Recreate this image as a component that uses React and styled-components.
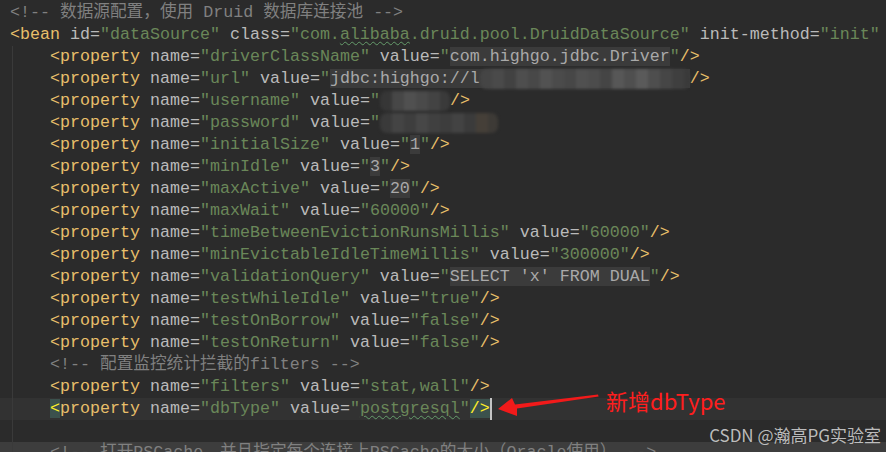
import React from "react";
import styled, { createGlobalStyle, css } from "styled-components";

const GlobalStyle = createGlobalStyle`
  html, body {
    margin: 0;
    padding: 0;
    background: #2b2b2b;
  }
  body {
    width: 886px;
    height: 452px;
    overflow: hidden;
  }
`;

const Editor = styled.div`
  position: relative;
  width: 886px;
  height: 452px;
  box-sizing: border-box;
  padding-top: 2px;
  overflow: hidden;
  background: #2b2b2b;
  font-family: "Liberation Mono", "Noto Sans CJK SC", monospace;
  font-size: 16.67px;
  color: #bababa;
`;

const Line = styled.div`
  height: 22px;
  line-height: 22px;
  white-space: pre;
  padding-left: ${(p) => (p.$indent ? 50 : 10)}px;
  background-color: ${(p) => (p.$current ? "#323232" : p.$band ? "#3d3d3d" : "transparent")};
  ${(p) =>
    p.$guide &&
    css`
      background-image: linear-gradient(
        to right,
        transparent 12px,
        #3a3a3a 12px,
        #3a3a3a 13px,
        transparent 13px
      );
    `}
`;

const Plain = styled.span`
  color: #bababa;
`;
const Tag = styled.span`
  color: #e8bf6a;
`;
const Str = styled.span`
  color: #6a8759;
`;
const Typo = styled(Str)`
  text-decoration-line: underline;
  text-decoration-style: wavy;
  text-decoration-color: #659c6b;
  text-decoration-thickness: 1px;
  text-underline-offset: 2px;
`;
const Inject = styled.span`
  color: #a9a9a9;
  background: #3b3b3b;
`;
const Comment = styled.span`
  color: #808080;
`;
const Match = styled.span`
  color: #ffef28;
  background: #3b514d;
`;
const Caret = styled.span`
  display: inline-block;
  width: 2px;
  height: 22px;
  vertical-align: top;
  background: #c4c4c4;
`;

const mosaic = (tiles) =>
  tiles.map((c, i) => `${c} ${i * 12}px, ${c} ${(i + 1) * 12}px`).join(", ");

const Blur = styled.span`
  display: inline-block;
  vertical-align: top;
  width: ${(p) => p.$w}px;
  height: 20px;
  margin-top: 1px;
  border-radius: 7px;
  filter: blur(1.4px);
  background: linear-gradient(to right, ${(p) => mosaic(p.$tiles)});
`;

const Note = styled.div`
  position: absolute;
  left: 496px;
  top: 384px;
  display: flex;
  align-items: center;
  gap: 6px;
`;

const NoteText = styled.span`
  font-family: "Noto Sans CJK SC", "Noto Sans", sans-serif;
  font-size: 22px;
  line-height: 1;
  color: #ff1e1e;
  margin-top: -2px;
`;

const Watermark = styled.div`
  position: absolute;
  right: 5px;
  top: 426px;
  font-family: "Noto Sans CJK SC", "Noto Sans", sans-serif;
  font-size: 17px;
  line-height: 17px;
  color: rgba(215, 215, 215, 0.85);
`;

const kinds = {
  plain: Plain,
  tag: Tag,
  str: Str,
  typo: Typo,
  inj: Inject,
  com: Comment,
  match: Match,
};

const urlTiles = [
  "#454545", "#4a4a4a", "#424242", "#4e4e4e", "#484848", "#525252",
  "#4b4b4b", "#474747", "#505050", "#4c4c4c", "#454545", "#575757",
  "#4f4f4f", "#5a5a5a", "#4e4e4e", "#464646", "#3f3f3f", "#3a3a3a",
];
const userTiles = ["#363636", "#474747", "#505050", "#4a4a4a", "#434343", "#3a3a3a"];
const passTiles = [
  "#3a3a3a", "#444444", "#3e3e3e", "#474747", "#404040", "#3d3d3d",
  "#434343", "#3b3b3b", "#453f38", "#3d3a36",
];

const prop = (name, value) => [
  ["tag", "<property"],
  ["plain", " name="],
  ["str", `"${name}"`],
  ["plain", " value="],
  ...value,
];

const lines = [
  { tokens: [["com", "<!-- 数据源配置，使用 Druid 数据库连接池 -->"]] },
  {
    tokens: [
      ["tag", "<bean"],
      ["plain", " id="],
      ["str", '"dataSource"'],
      ["plain", " class="],
      ["str", '"com.'],
      ["typo", "alibaba"],
      ["str", '.druid.pool.DruidDataSource"'],
      ["plain", " init-method="],
      ["str", '"init"'],
    ],
  },
  {
    indent: true,
    tokens: prop("driverClassName", [
      ["str", '"'],
      ["inj", "com.highgo.jdbc.Driver"],
      ["str", '"'],
      ["tag", "/>"],
    ]),
  },
  {
    indent: true,
    tokens: prop("url", [
      ["str", '"'],
      ["inj", "jdbc:highgo://l", urlTiles, 210],
      ["tag", "/>"],
    ]),
  },
  {
    indent: true,
    tokens: prop("username", [["str", '"'], ["blur", userTiles, 70], ["tag", "/>"]]),
  },
  {
    indent: true,
    tokens: prop("password", [["str", '"'], ["blur", passTiles, 118]]),
  },
  {
    indent: true,
    tokens: prop("initialSize", [["str", '"'], ["inj", "1"], ["str", '"'], ["tag", "/>"]]),
  },
  {
    indent: true,
    tokens: prop("minIdle", [["str", '"'], ["inj", "3"], ["str", '"'], ["tag", "/>"]]),
  },
  {
    indent: true,
    tokens: prop("maxActive", [["str", '"'], ["inj", "20"], ["str", '"'], ["tag", "/>"]]),
  },
  { indent: true, tokens: prop("maxWait", [["str", '"60000"'], ["tag", "/>"]]) },
  {
    indent: true,
    tokens: prop("timeBetweenEvictionRunsMillis", [["str", '"60000"'], ["tag", "/>"]]),
  },
  {
    indent: true,
    tokens: prop("minEvictableIdleTimeMillis", [["str", '"300000"'], ["tag", "/>"]]),
  },
  {
    indent: true,
    tokens: prop("validationQuery", [
      ["str", '"'],
      ["inj", "SELECT 'x' FROM DUAL"],
      ["str", '"'],
      ["tag", "/>"],
    ]),
  },
  { indent: true, tokens: prop("testWhileIdle", [["str", '"true"'], ["tag", "/>"]]) },
  { indent: true, tokens: prop("testOnBorrow", [["str", '"false"'], ["tag", "/>"]]) },
  { indent: true, tokens: prop("testOnReturn", [["str", '"false"'], ["tag", "/>"]]) },
  { indent: true, tokens: [["com", "<!-- 配置监控统计拦截的filters -->"]] },
  { indent: true, tokens: prop("filters", [["str", '"stat,wall"'], ["tag", "/>"]]) },
  {
    indent: true,
    current: true,
    tokens: [
      ["match", "<"],
      ["tag", "property"],
      ["plain", " name="],
      ["str", '"dbType"'],
      ["plain", " value="],
      ["str", '"'],
      ["typo", "postgresql"],
      ["str", '"'],
      ["match", "/>"],
      ["caret"],
    ],
  },
  { indent: true, tokens: [] },
  {
    indent: true,
    band: true,
    tokens: [["com", "<!-- 打开PSCache，并且指定每个连接上PSCache的大小（Oracle使用） -->"]],
  },
];

const Token = ({ t }) => {
  const [kind, a, b, c] = t;
  if (kind === "caret") return <Caret />;
  if (kind === "blur") return <Blur $tiles={a} $w={b} />;
  const Comp = kinds[kind];
  if (kind === "inj" && b) {
    return (
      <Comp>
        {a}
        <Blur $tiles={b} $w={c} />
      </Comp>
    );
  }
  return <Comp>{a}</Comp>;
};

const Arrow = () => (
  <svg width="104" height="34" viewBox="0 0 104 34">
    <polygon
      points="2,25 16,14 19,20.6 102,10.6 102.6,12.6 21,24.6 21,32"
      fill="#f21a1a"
    />
  </svg>
);

export default function App() {
  return (
    <>
      <GlobalStyle />
      <Editor>
        {lines.map((line, i) => (
          <Line
            key={i}
            $indent={line.indent}
            $guide={i >= 2}
            $current={line.current}
            $band={line.band}
          >
            {line.tokens.map((t, j) => (
              <Token key={j} t={t} />
            ))}
          </Line>
        ))}
        <Note>
          <Arrow />
          <NoteText>新增dbType</NoteText>
        </Note>
        <Watermark>CSDN @瀚高PG实验室</Watermark>
      </Editor>
    </>
  );
}
